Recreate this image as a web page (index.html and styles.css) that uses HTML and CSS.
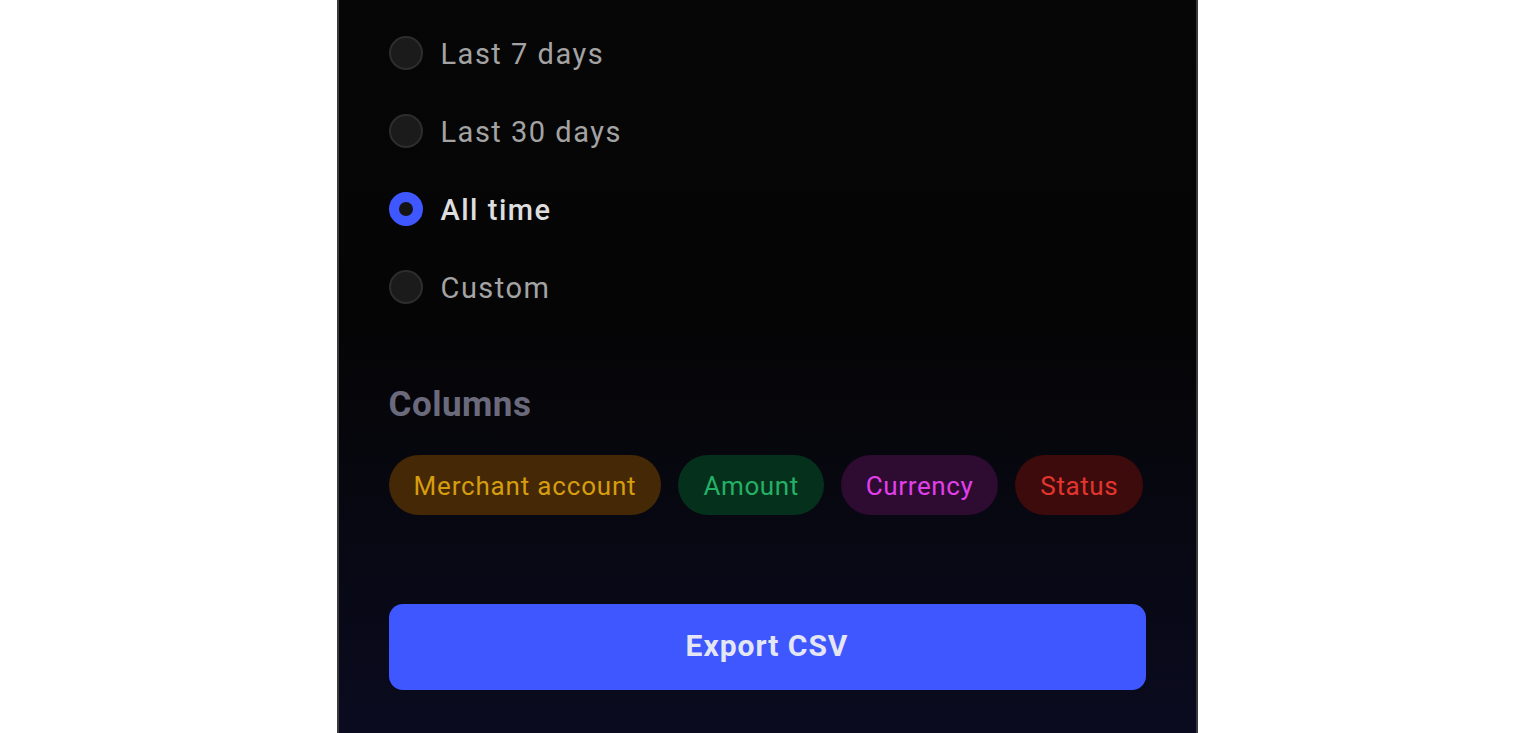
FILE: index.html
```html
<!DOCTYPE html>
<html lang="en">
<head>
  <meta charset="UTF-8">
  <title>Export transactions</title>
  <link rel="stylesheet" href="styles.css">
</head>
<body>

  <div class="panel">

    <div class="range">
      <label class="option">
        <span class="radio"></span>
        <span class="label">Last 7 days</span>
      </label>
      <label class="option">
        <span class="radio"></span>
        <span class="label">Last 30 days</span>
      </label>
      <label class="option checked">
        <span class="radio"></span>
        <span class="label">All time</span>
      </label>
      <label class="option">
        <span class="radio"></span>
        <span class="label">Custom</span>
      </label>
    </div>

    <h2 class="section">Columns</h2>

    <div class="chips">
      <span class="chip merchant">Merchant account</span>
      <span class="chip amount">Amount</span>
      <span class="chip currency">Currency</span>
      <span class="chip status">Status</span>
    </div>

    <button class="export">Export CSV</button>

  </div>

</body>
</html>
```

FILE: styles.css
```css
html, body {
  margin: 0;
  height: 100%;
  background: #fff;
}

body {
  font-family: Roboto, "Noto Sans", Arial, sans-serif;
  display: flex;
  justify-content: center;
  overflow: hidden;
}

.panel {
  width: 861px;
  flex-shrink: 0;
  margin-left: -2px;
  min-height: 100%;
  box-sizing: border-box;
  padding: 14px 50px 0 50px;
  background: linear-gradient(to bottom, #060606 0%, #050506 45%, #0a0b1f 100%);
  border-left: 2px solid #3a3a3a;
  border-right: 2px solid #3a3a3a;
}

.range {
  display: flex;
  flex-direction: column;
}

.option {
  display: flex;
  align-items: center;
  gap: 18px;
  height: 78px;
  cursor: pointer;
}

.radio {
  width: 34px;
  height: 34px;
  box-sizing: border-box;
  border-radius: 50%;
  background: #1b1b1b;
  border: 2px solid #2d2d2d;
}

.label {
  font-size: 29px;
  letter-spacing: 1.5px;
  color: #a3a3a3;
  padding-top: 2px;
}

.option.checked .radio {
  background: #141414;
  border: 10px solid #3f57ff;
}

.option.checked .label {
  color: #dedede;
  font-weight: 500;
}

.section {
  margin: 59px 0 0;
  font-size: 35px;
  font-weight: 700;
  letter-spacing: 0.5px;
  color: #6a6a7c;
  line-height: 40px;
}

.chips {
  display: flex;
  gap: 17px;
  margin-top: 30px;
}

.chip {
  flex-shrink: 0;
  white-space: nowrap;
  height: 60px;
  padding: 0 25px;
  border-radius: 30px;
  display: flex;
  align-items: center;
  font-size: 26px;
  letter-spacing: 0.6px;
  padding-top: 2px;
  box-sizing: border-box;
}

.merchant { background: #452806; color: #d69d0e; letter-spacing: 0.82px; }
.amount   { background: #05301c; color: #24b066; }
.currency { background: #2e0b31; color: #e040ea; }
.status   { background: #3d0b0b; color: #e2352d; }

.export {
  display: block;
  width: 100%;
  height: 86px;
  margin-top: 89px;
  padding-bottom: 4px;
  border: none;
  border-radius: 14px;
  background: #3f57ff;
  color: #e4e6f4;
  font-family: inherit;
  font-size: 30px;
  font-weight: 700;
  letter-spacing: 1px;
  cursor: pointer;
}
```
